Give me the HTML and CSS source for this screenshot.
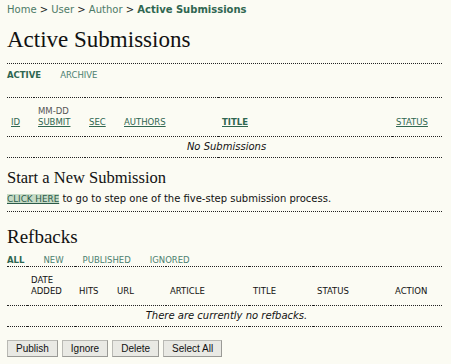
FILE: index.html
```html
<!DOCTYPE html>
<html>
<head>
<meta charset="utf-8">
<link rel="stylesheet" href="styles.css">
</head>
<body>
<div class="page">
  <div class="breadcrumb">
    <a href="#">Home</a> &gt; <a href="#">User</a> &gt; <a href="#">Author</a> &gt; <a href="#" class="current">Active Submissions</a>
  </div>
  <h2 class="page-title">Active Submissions</h2>

  <ul class="menu menu-top">
    <li><a href="#" class="current">Active</a></li>
    <li><a href="#">Archive</a></li>
  </ul>

  <table class="listing subs">
    <colgroup>
      <col class="c-id"><col class="c-date"><col class="c-sec"><col class="c-auth"><col class="c-title"><col class="c-status">
    </colgroup>
    <tr class="heading">
      <td><a href="#" class="sort">ID</a></td>
      <td><span class="plain">MM-DD</span><br><a href="#" class="sort">Submit</a></td>
      <td><a href="#" class="sort">Sec</a></td>
      <td><a href="#" class="sort">Authors</a></td>
      <td><a href="#" class="sort bold">Title</a></td>
      <td><a href="#" class="sort">Status</a></td>
    </tr>
    <tr class="empty">
      <td colspan="6">No Submissions</td>
    </tr>
  </table>

  <h3 class="section-title">Start a New Submission</h3>
  <p class="intro"><a href="#" class="action">Click Here</a> to go to step one of the five-step submission process.</p>

  <h3 class="section-title big">Refbacks</h3>
  <ul class="menu menu-ref">
    <li><a href="#" class="current">All</a></li>
    <li><a href="#">New</a></li>
    <li><a href="#">Published</a></li>
    <li><a href="#">Ignored</a></li>
  </ul>

  <table class="listing refs">
    <colgroup>
      <col class="r-check"><col class="r-date"><col class="r-hits"><col class="r-url"><col class="r-article"><col class="r-title"><col class="r-status"><col class="r-action">
    </colgroup>
    <tr class="heading">
      <td></td>
      <td>Date<br>Added</td>
      <td>Hits</td>
      <td>URL</td>
      <td>Article</td>
      <td>Title</td>
      <td>Status</td>
      <td>Action</td>
    </tr>
    <tr class="empty">
      <td colspan="8">There are currently no refbacks.</td>
    </tr>
  </table>

  <div class="buttons">
    <button class="btn">Publish</button>
    <button class="btn">Ignore</button>
    <button class="btn">Delete</button>
    <button class="btn">Select All</button>
  </div>
</div>
</body>
</html>
```

FILE: styles.css
```css
html, body {
  margin: 0;
  padding: 0;
  background: #fbfbf3;
}

body {
  font-family: "DejaVu Sans", Verdana, sans-serif;
  font-size: 10px;
  color: #222;
}

.page {
  padding: 0 9px 0 7px;
}

a {
  color: #3f6d5a;
  text-decoration: none;
}

.breadcrumb {
  padding-top: 3px;
  line-height: 14px;
  color: #222;
}

.breadcrumb a {
  color: #4d7a66;
}

.breadcrumb a.current {
  font-weight: bold;
  color: #2f6650;
}

.page-title {
  margin: 9px 0 0;
  padding-bottom: 9px;
  font-family: "Liberation Serif", Georgia, serif;
  font-weight: normal;
  font-size: 23px;
  line-height: 28px;
  color: #111;
  border-bottom: 1px dotted #222;
}

.menu {
  list-style: none;
  margin: 0;
  padding: 0;
  display: flex;
  font-size: 8.5px;
  line-height: 11px;
  text-transform: uppercase;
}

.menu a {
  color: #4b8070;
}

.menu a.current {
  color: #2e6650;
  font-weight: bold;
}

.menu-top {
  padding-top: 6px;
  gap: 19px;
}

.menu-ref {
  margin-top: 7px;
  gap: 19px;
}

.listing {
  width: 100%;
  border-collapse: collapse;
  table-layout: fixed;
}

.listing td {
  padding: 0 0 0 4px;
}

.listing .heading td {
  font-size: 8.5px;
  line-height: 11px;
  text-transform: uppercase;
  vertical-align: bottom;
  padding-top: 8px;
  padding-bottom: 8px;
  white-space: nowrap;
}

.listing .heading {
  border-top: 1px dotted #222;
  border-bottom: 1px dotted #222;
}

.listing .empty {
  border-bottom: 1px dotted #222;
}

.listing .empty td {
  text-align: center;
  font-style: italic;
  line-height: 14px;
  padding-top: 3px;
  padding-bottom: 3px;
  color: #111;
}

.subs {
  margin-top: 16px;
}

.subs .plain {
  color: #555;
}

.subs a.sort {
  color: #2f6650;
  text-decoration: underline;
  text-underline-offset: 1px;
}

.subs a.bold {
  font-weight: bold;
}

.c-id { width: 27px; }
.c-date { width: 51px; }
.c-sec { width: 35px; }
.c-auth { width: 98px; }
.c-title { width: 174px; }
.c-status { width: 50px; }

.refs .heading td {
  color: #111;
}

.r-check { width: 20px; }
.r-date { width: 48px; }
.r-hits { width: 38px; }
.r-url { width: 53px; }
.r-article { width: 83px; }
.r-title { width: 64px; }
.r-status { width: 78px; }
.r-action { width: 51px; }

.section-title {
  margin: 10px 0 0;
  font-family: "Liberation Serif", Georgia, serif;
  font-weight: normal;
  font-size: 16.5px;
  line-height: 20px;
  color: #111;
}

.section-title.big {
  margin-top: 14px;
  font-size: 19px;
  line-height: 22px;
}

.intro {
  margin: 4px 0 0;
  padding-bottom: 5px;
  line-height: 14px;
  border-bottom: 1px dotted #222;
  color: #111;
}

.action {
  font-size: 8.8px;
  text-transform: uppercase;
  text-decoration: underline;
  color: #2b5a48;
  background: #c6dbc6;
}

.buttons {
  margin-top: 13px;
  display: flex;
  gap: 4px;
}

.btn {
  font-family: "Liberation Sans", Arial, sans-serif;
  font-size: 10px;
  height: 17px;
  padding: 0 8px;
  margin: 0;
  background: #e9e9e4;
  border: 1px solid #b9b9b4;
  border-right-color: #9a9a96;
  border-bottom-color: #9a9a96;
  color: #111;
  line-height: 15px;
}
```
